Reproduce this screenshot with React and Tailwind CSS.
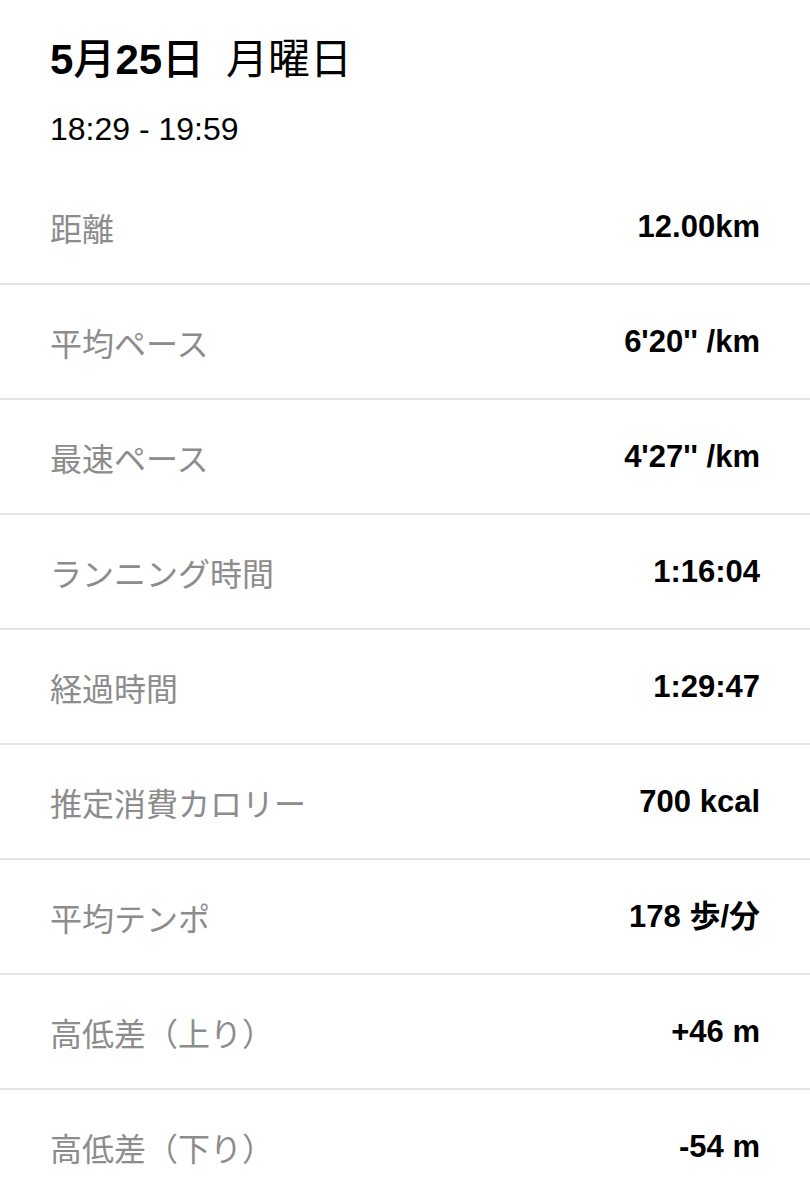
import React from "react";

const rows = [
  ["距離", "12.00km"],
  ["平均ペース", "6'20'' /km"],
  ["最速ペース", "4'27'' /km"],
  ["ランニング時間", "1:16:04"],
  ["経過時間", "1:29:47"],
  ["推定消費カロリー", "700 kcal"],
  ["平均テンポ", "178 歩/分"],
  ["高低差（上り）", "+46 m"],
  ["高低差（下り）", "-54 m"],
];

const cjk = { fontFamily: '"Noto Sans CJK JP", sans-serif' };

export default function App() {
  return (
    <div
      className="w-[810px] h-[1200px] bg-white overflow-hidden text-black"
      style={{ fontFamily: '"Liberation Sans", "Noto Sans CJK JP", sans-serif' }}
    >
      <div className="px-[50px] pt-[35px]">
        <div className="flex items-baseline gap-[22px] text-[42px] leading-[42px]">
          <span>
            <span className="font-bold">5</span>
            <span className="font-medium" style={cjk}>月</span>
            <span className="font-bold">25</span>
            <span className="font-medium" style={cjk}>日</span>
          </span>
          <span className="font-normal" style={cjk}>月曜日</span>
        </div>
        <div className="mt-[33px] text-[32px] leading-[31px]">18:29 - 19:59</div>
      </div>
      <div className="mt-[25px]">
        {rows.map(([label, value], i) => (
          <div
            key={i}
            className="h-[115px] flex items-center justify-between px-[50px] border-b-2 border-[#e3e3e3]"
          >
            <span
              className="text-[32px] leading-none text-[#8c8c8c] font-normal"
              style={cjk}
            >
              {label}
            </span>
            <span className="text-[31px] leading-none font-bold">{value}</span>
          </div>
        ))}
      </div>
    </div>
  );
}
